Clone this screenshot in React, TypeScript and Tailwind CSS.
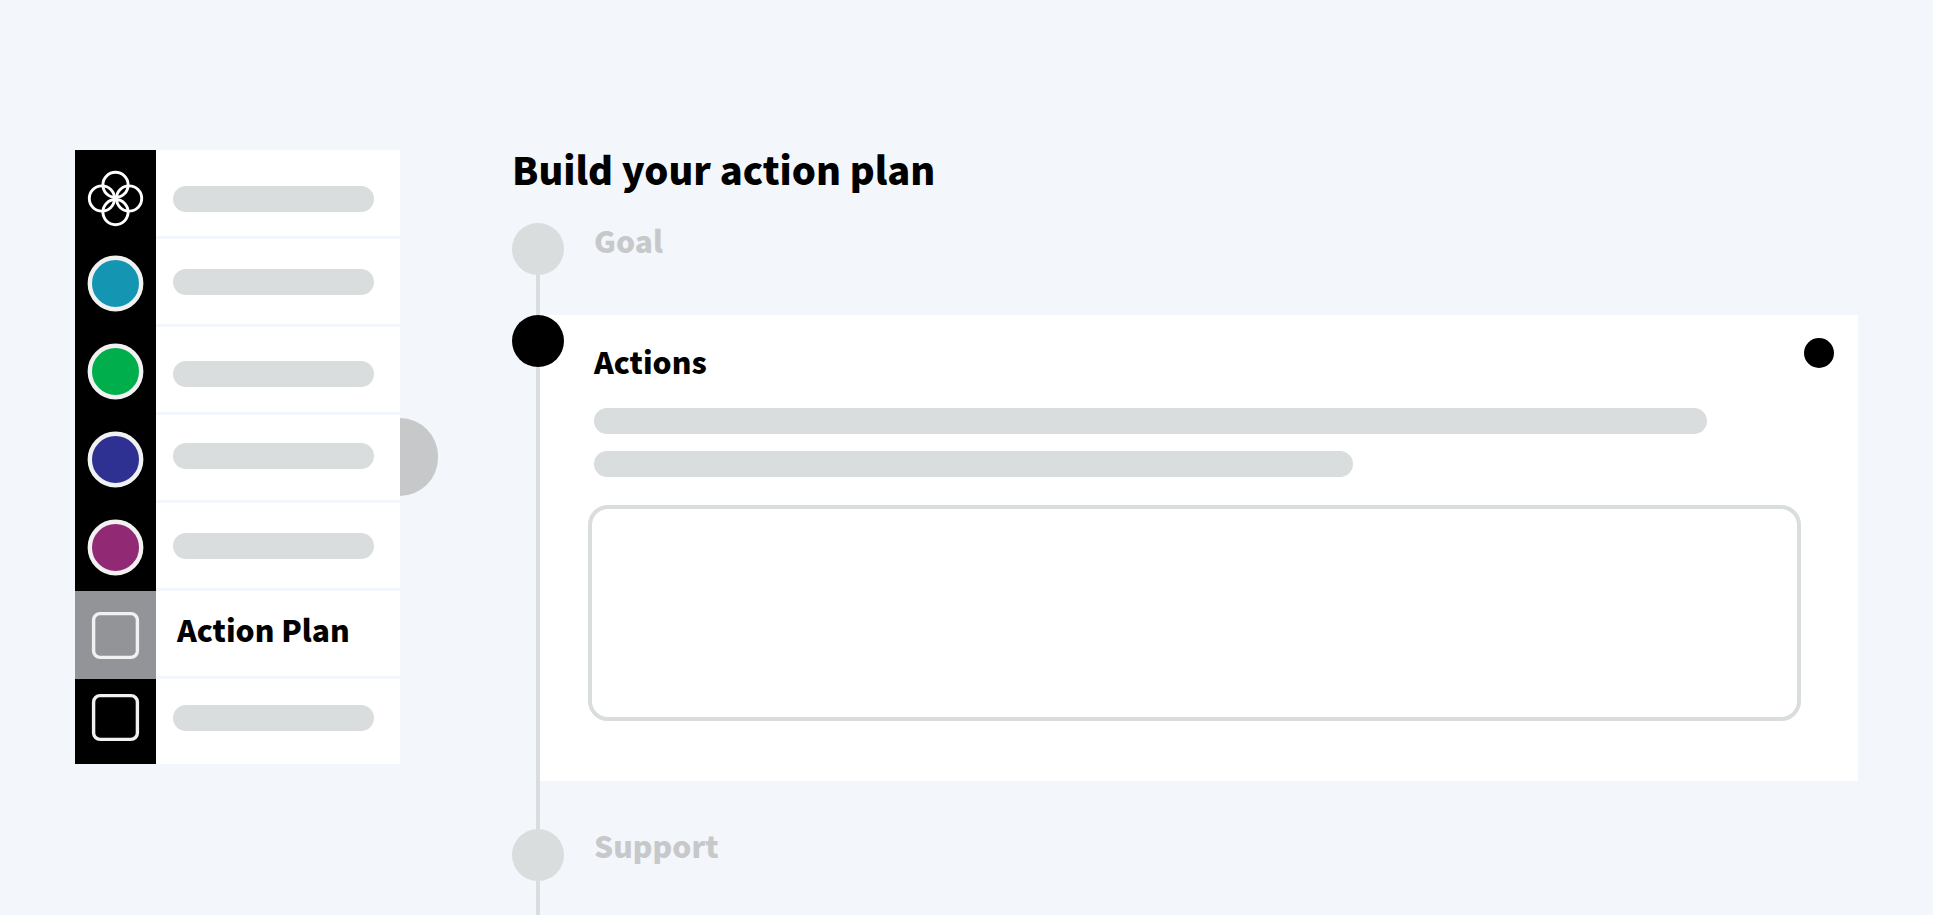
import type { ReactNode } from "react";

const Clover = () => (
  <svg width="57" height="57" viewBox="0 0 57 57" fill="none" stroke="#fff" strokeWidth="2.9" aria-hidden="true">
    <circle cx="28.5" cy="14.9" r="12.6" />
    <circle cx="42.1" cy="28.5" r="12.6" />
    <circle cx="28.5" cy="42.1" r="12.6" />
    <circle cx="14.9" cy="28.5" r="12.6" />
  </svg>
);

const Dot = ({ color }: { color: string }) => (
  <svg width="57" height="57" viewBox="0 0 57 57" aria-hidden="true">
    <circle cx="28.5" cy="28.5" r="25.7" fill={color} stroke="#f1f1f1" strokeWidth="4.4" />
  </svg>
);

const Square = () => (
  <svg width="57" height="57" viewBox="0 0 57 57" fill="none" aria-hidden="true">
    <rect x="6.6" y="6.6" width="43.8" height="43.8" rx="6.5" stroke="#f1f1f1" strokeWidth="3.4" />
  </svg>
);

type NavItem = {
  id: string;
  icon: ReactNode;
  label?: string;
  iconClass?: string;
  labelClass?: string;
};

const NAV_ITEMS: NavItem[] = [
  { id: "home", icon: <Clover />, iconClass: "pt-2", labelClass: "pt-3" },
  { id: "teal", icon: <Dot color="#1496b2" /> },
  { id: "green", icon: <Dot color="#00ae4c" />, labelClass: "pt-2" },
  { id: "blue", icon: <Dot color="#2e3192" />, labelClass: "pb-1" },
  { id: "purple", icon: <Dot color="#922975" /> },
  { id: "action-plan", icon: <Square />, label: "Action Plan", labelClass: "pb-2.5" },
  { id: "more", icon: <Square />, iconClass: "pb-2", labelClass: "pb-2" },
];

const Sidebar = () => (
  <nav className="w-[325px] bg-white">
    <ul>
      {NAV_ITEMS.map(({ id, icon, label, iconClass = "", labelClass = "" }) => (
        <li key={id} className="group">
          <a href={`#${id}`} className="flex h-[88px] group-first:h-[89px] group-last:h-[85px]">
            <span
              className={`flex w-[81px] shrink-0 items-center justify-center ${label ? "bg-[#939498]" : "bg-black"} ${iconClass}`}
            >
              {icon}
            </span>
            <span
              className={`flex flex-1 items-center border-b-3 border-[#f3f6fb] pl-[17px] pr-[26px] group-last:border-b-0 ${labelClass}`}
            >
              {label ? (
                <span className="whitespace-nowrap pl-1 text-[30px] leading-8 font-black">{label}</span>
              ) : (
                <span className="h-[26px] w-full rounded-full bg-[#d9dddd]" />
              )}
            </span>
          </a>
        </li>
      ))}
    </ul>
  </nav>
);

type StepProps = {
  active?: boolean;
  className?: string;
  children: ReactNode;
};

const Step = ({ active = false, className = "", children }: StepProps) => (
  <li className={`flex ${className}`}>
    <div className="relative z-10 flex w-[52px] shrink-0 flex-col items-center">
      <span className={`size-[52px] rounded-full ${active ? "bg-black" : "bg-[#d9dddd]"}`} />
      <span className="w-1 flex-1 bg-[#d9dddd]" />
    </div>
    {children}
  </li>
);

export default function App() {
  return (
    <div className="flex min-h-screen items-stretch bg-[#f3f6fb] px-[75px] pt-36 font-['Noto_Sans_CJK_SC',sans-serif] text-black">
      <div className="mt-1.5 flex shrink-0 items-center self-start">
        <Sidebar />
        <button type="button" aria-label="Toggle menu" className="h-[78px] w-[38px] rounded-r-full bg-[#c7c8ca]" />
      </div>

      <main className="ml-[74px] flex min-w-0 flex-1 flex-col">
        <h1 className="mb-[29px] text-[38px] leading-[50px] font-black">Build your action plan</h1>

        <ol className="flex flex-1 flex-col">
          <Step className="h-[92px]">
            <h2 className="pl-[30px] text-[30px] leading-[34px] font-black text-[#c7c8ca]">Goal</h2>
          </Step>

          <Step active>
            <section className="relative mb-12 -ml-6 min-w-0 flex-1 bg-white pt-[29px] pr-[57px] pb-[60px] pl-12">
              <button
                type="button"
                aria-label="Options"
                className="absolute top-[23px] right-6 size-[30px] rounded-full bg-black"
              />
              <div className="pl-1.5">
                <h2 id="actions" className="text-[30px] leading-[34px] font-black">Actions</h2>
                <div className="mt-[30px] flex flex-col gap-[17px]">
                  <span className="h-[26px] w-[92.2%] rounded-full bg-[#d9dddd]" />
                  <span className="h-[26px] w-[62.9%] rounded-full bg-[#d9dddd]" />
                </div>
              </div>
              <textarea
                aria-labelledby="actions"
                className="mt-7 block h-[216px] w-full resize-none rounded-[20px] border-4 border-[#d9dddd] bg-white p-4 outline-none"
              />
            </section>
          </Step>

          <Step className="flex-1">
            <h2 className="pl-[30px] text-[30px] leading-8 font-black text-[#c7c8ca]">Support</h2>
          </Step>
        </ol>
      </main>
    </div>
  );
}
